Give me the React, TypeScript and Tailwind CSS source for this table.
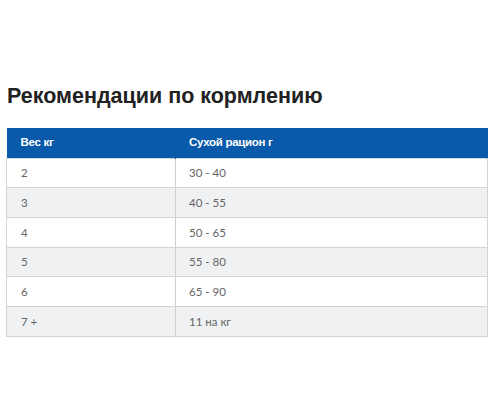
const rows = [
  ["2", "30 - 40"],
  ["3", "40 - 55"],
  ["4", "50 - 65"],
  ["5", "55 - 80"],
  ["6", "65 - 90"],
  ["7 +", "11 на кг"],
];

export default function App() {
  return (
    <div className="h-[420px] w-[500px] bg-white pt-[83px]">
      <h2 className="pl-[7px] font-['Liberation_Sans',Arial,sans-serif] text-[21.5px] font-bold leading-[26px] text-[#222]">
        Рекомендации по кормлению
      </h2>
      <table className="ml-[6px] mt-[19px] w-[482px] border-collapse font-['Lato',sans-serif] text-[11.5px] text-[#666]">
        <thead>
          <tr className="h-[30px] bg-[#0a5aab] font-['Liberation_Sans',Arial,sans-serif] text-[11.5px] font-bold tracking-[-0.3px] text-white">
            <th className="w-[169px] border-r border-[#0a5aab] pl-[14px] text-left">Вес кг</th>
            <th className="pl-[13px] text-left">Сухой рацион г</th>
          </tr>
        </thead>
        <tbody>
          {rows.map(([w, g], i) => (
            <tr
              key={w}
              className={`h-[29.7px] border border-[#d4d4d4] ${i % 2 === 1 ? "bg-[#f0f1f3]" : "bg-white"}`}
            >
              <td className="border-r border-[#cfcfcf] pl-[14px]">{w}</td>
              <td className="pl-[13px]">{g}</td>
            </tr>
          ))}
        </tbody>
      </table>
    </div>
  );
}
